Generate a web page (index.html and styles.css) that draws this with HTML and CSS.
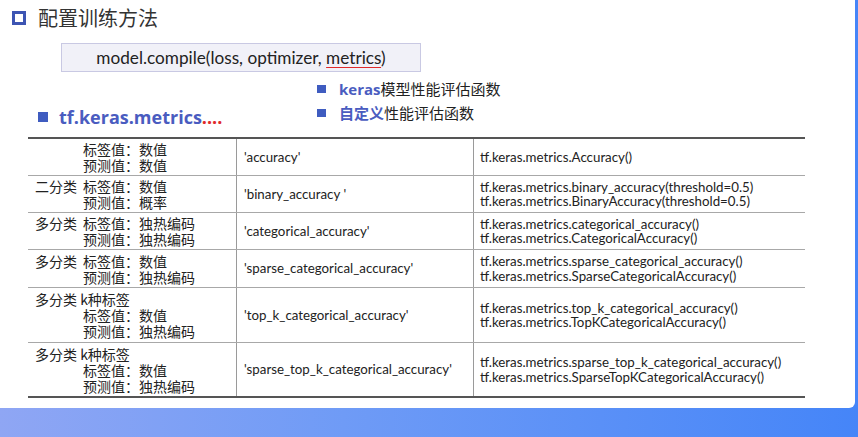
FILE: index.html
```html
<!DOCTYPE html>
<html lang="zh">
<head>
<meta charset="utf-8">
<title>配置训练方法</title>
<link rel="stylesheet" href="styles.css">
</head>
<body>
<div class="slide">
  <div class="title-row">
    <span class="title-icon"></span>
    <h1 class="title">配置训练方法</h1>
  </div>
  <div class="code-box">model.compile(loss, optimizer, <span class="uline">metrics</span>)</div>
  <div class="section">
    <div class="heading"><span class="sq big"></span><span class="heading-text">tf.keras.metrics<span class="red">....</span></span></div>
    <ul class="bullets">
      <li><span class="sq"></span><span><b class="hl">keras</b>模型性能评估函数</span></li>
      <li><span class="sq"></span><span><b class="hl">自定义</b>性能评估函数</span></li>
    </ul>
  </div>
  <div class="table">
    <div class="row r1">
      <div class="c1"><div class="ln"><span class="cat"></span>标签值：数值</div><div class="ln"><span class="cat"></span>预测值：数值</div></div>
      <div class="c2">'accuracy'</div>
      <div class="c3">tf.keras.metrics.Accuracy()</div>
    </div>
    <div class="row r2">
      <div class="c1"><div class="ln"><span class="cat">二分类</span>标签值：数值</div><div class="ln"><span class="cat"></span>预测值：概率</div></div>
      <div class="c2">'binary_accuracy '</div>
      <div class="c3"><div>tf.keras.metrics.binary_accuracy(threshold=0.5)</div><div>tf.keras.metrics.BinaryAccuracy(threshold=0.5)</div></div>
    </div>
    <div class="row r3">
      <div class="c1"><div class="ln"><span class="cat">多分类</span>标签值：独热编码</div><div class="ln"><span class="cat"></span>预测值：独热编码</div></div>
      <div class="c2">'categorical_accuracy'</div>
      <div class="c3"><div>tf.keras.metrics.categorical_accuracy()</div><div>tf.keras.metrics.CategoricalAccuracy()</div></div>
    </div>
    <div class="row r4">
      <div class="c1"><div class="ln"><span class="cat">多分类</span>标签值：数值</div><div class="ln"><span class="cat"></span>预测值：独热编码</div></div>
      <div class="c2">'sparse_categorical_accuracy'</div>
      <div class="c3"><div>tf.keras.metrics.sparse_categorical_accuracy()</div><div>tf.keras.metrics.SparseCategoricalAccuracy()</div></div>
    </div>
    <div class="row r5">
      <div class="c1"><div class="ln">多分类 k种标签</div><div class="ln"><span class="cat"></span>标签值：数值</div><div class="ln"><span class="cat"></span>预测值：独热编码</div></div>
      <div class="c2">'top_k_categorical_accuracy'</div>
      <div class="c3"><div>tf.keras.metrics.top_k_categorical_accuracy()</div><div>tf.keras.metrics.TopKCategoricalAccuracy()</div></div>
    </div>
    <div class="row r6">
      <div class="c1"><div class="ln">多分类 k种标签</div><div class="ln"><span class="cat"></span>标签值：数值</div><div class="ln"><span class="cat"></span>预测值：独热编码</div></div>
      <div class="c2">'sparse_top_k_categorical_accuracy'</div>
      <div class="c3"><div>tf.keras.metrics.sparse_top_k_categorical_accuracy()</div><div>tf.keras.metrics.SparseTopKCategoricalAccuracy()</div></div>
    </div>
  </div>
</div>
</body>
</html>
```

FILE: styles.css
```css
* { box-sizing: border-box; }
html, body { margin: 0; padding: 0; }
body {
  width: 858px;
  height: 437px;
  overflow: hidden;
  background: linear-gradient(to right, #8fa6f4 0%, #6f9bf6 40%, #4585f8 100%);
  font-family: "Noto Sans CJK SC", sans-serif;
  color: #222;
}
.slide {
  width: 855px;
  height: 408px;
  background: #fff;
  border-bottom-right-radius: 6px;
  overflow: hidden;
}
.title-row {
  display: flex;
  align-items: center;
  height: 36px;
  padding-left: 12px;
  gap: 12px;
}
.title-icon {
  width: 14px;
  height: 14px;
  border: 3px solid #3d55b3;
}
.title {
  margin: 0;
  font-size: 20px;
  font-weight: normal;
  color: #333;
  line-height: 36px;
}
.code-box {
  margin: 7px 0 0 61px;
  width: 360px;
  height: 29px;
  background: #f1f1f8;
  border: 1px solid #c9c9e3;
  text-align: center;
  font-family: Lato, "Liberation Sans", sans-serif;
  font-size: 17.2px;
  line-height: 27px;
  color: #222;
}
.uline {
  text-decoration: underline;
  text-decoration-color: #e02a2a;
  text-underline-offset: 3px;
}
.section {
  display: flex;
  align-items: flex-start;
  padding-left: 38px;
}
.heading {
  width: 279px;
  margin-top: 33px;
  display: flex;
  align-items: center;
  gap: 11px;
  height: 24px;
}
.heading-text {
  font-family: "Open Sans", "Liberation Sans", sans-serif;
  font-weight: bold;
  font-size: 18px;
  color: #4a5cc0;
}
.red { color: #e02a2a; }
.sq {
  width: 9px;
  height: 8px;
  background: #3f5cc0;
  flex: none;
}
.sq.big { width: 10px; height: 10px; }
.bullets {
  list-style: none;
  margin: 5px 0 0 0;
  padding: 0;
  font-size: 15px;
  line-height: 23px;
  color: #222;
}
.bullets li {
  display: flex;
  align-items: center;
  gap: 13px;
}
.hl {
  color: #4a5cc0;
  font-family: "Open Sans", "Noto Sans CJK SC", sans-serif;
}
.table {
  margin: 8px 0 0 28px;
  width: 777px;
  border-top: 2px solid #555;
  border-bottom: 2px solid #555;
}
.row {
  display: grid;
  grid-template-columns: 208px 237px 332px;
  border-bottom: 1px solid #a8a8a8;
}
.row:last-child { border-bottom: none; }
.r1, .r2, .r3 { height: 37px; }
.r4 { height: 38px; }
.r5 { height: 55px; }
.r6 { height: 53px; }
.c1, .c2, .c3 {
  display: flex;
  flex-direction: column;
  justify-content: center;
}
.c1 {
  padding-left: 7px;
  font-size: 14px;
  line-height: 16px;
  color: #222;
}
.ln { display: flex; white-space: nowrap; }
.cat { width: 48px; flex: none; }
.c2, .c3 {
  border-left: 1px solid #9a9a9a;
  font-family: Lato, "Liberation Sans", sans-serif;
  font-size: 13.3px;
  line-height: 14.5px;
  white-space: nowrap;
}
.c2 { padding-left: 7px; }
.c3 { padding-left: 6px; }
```
